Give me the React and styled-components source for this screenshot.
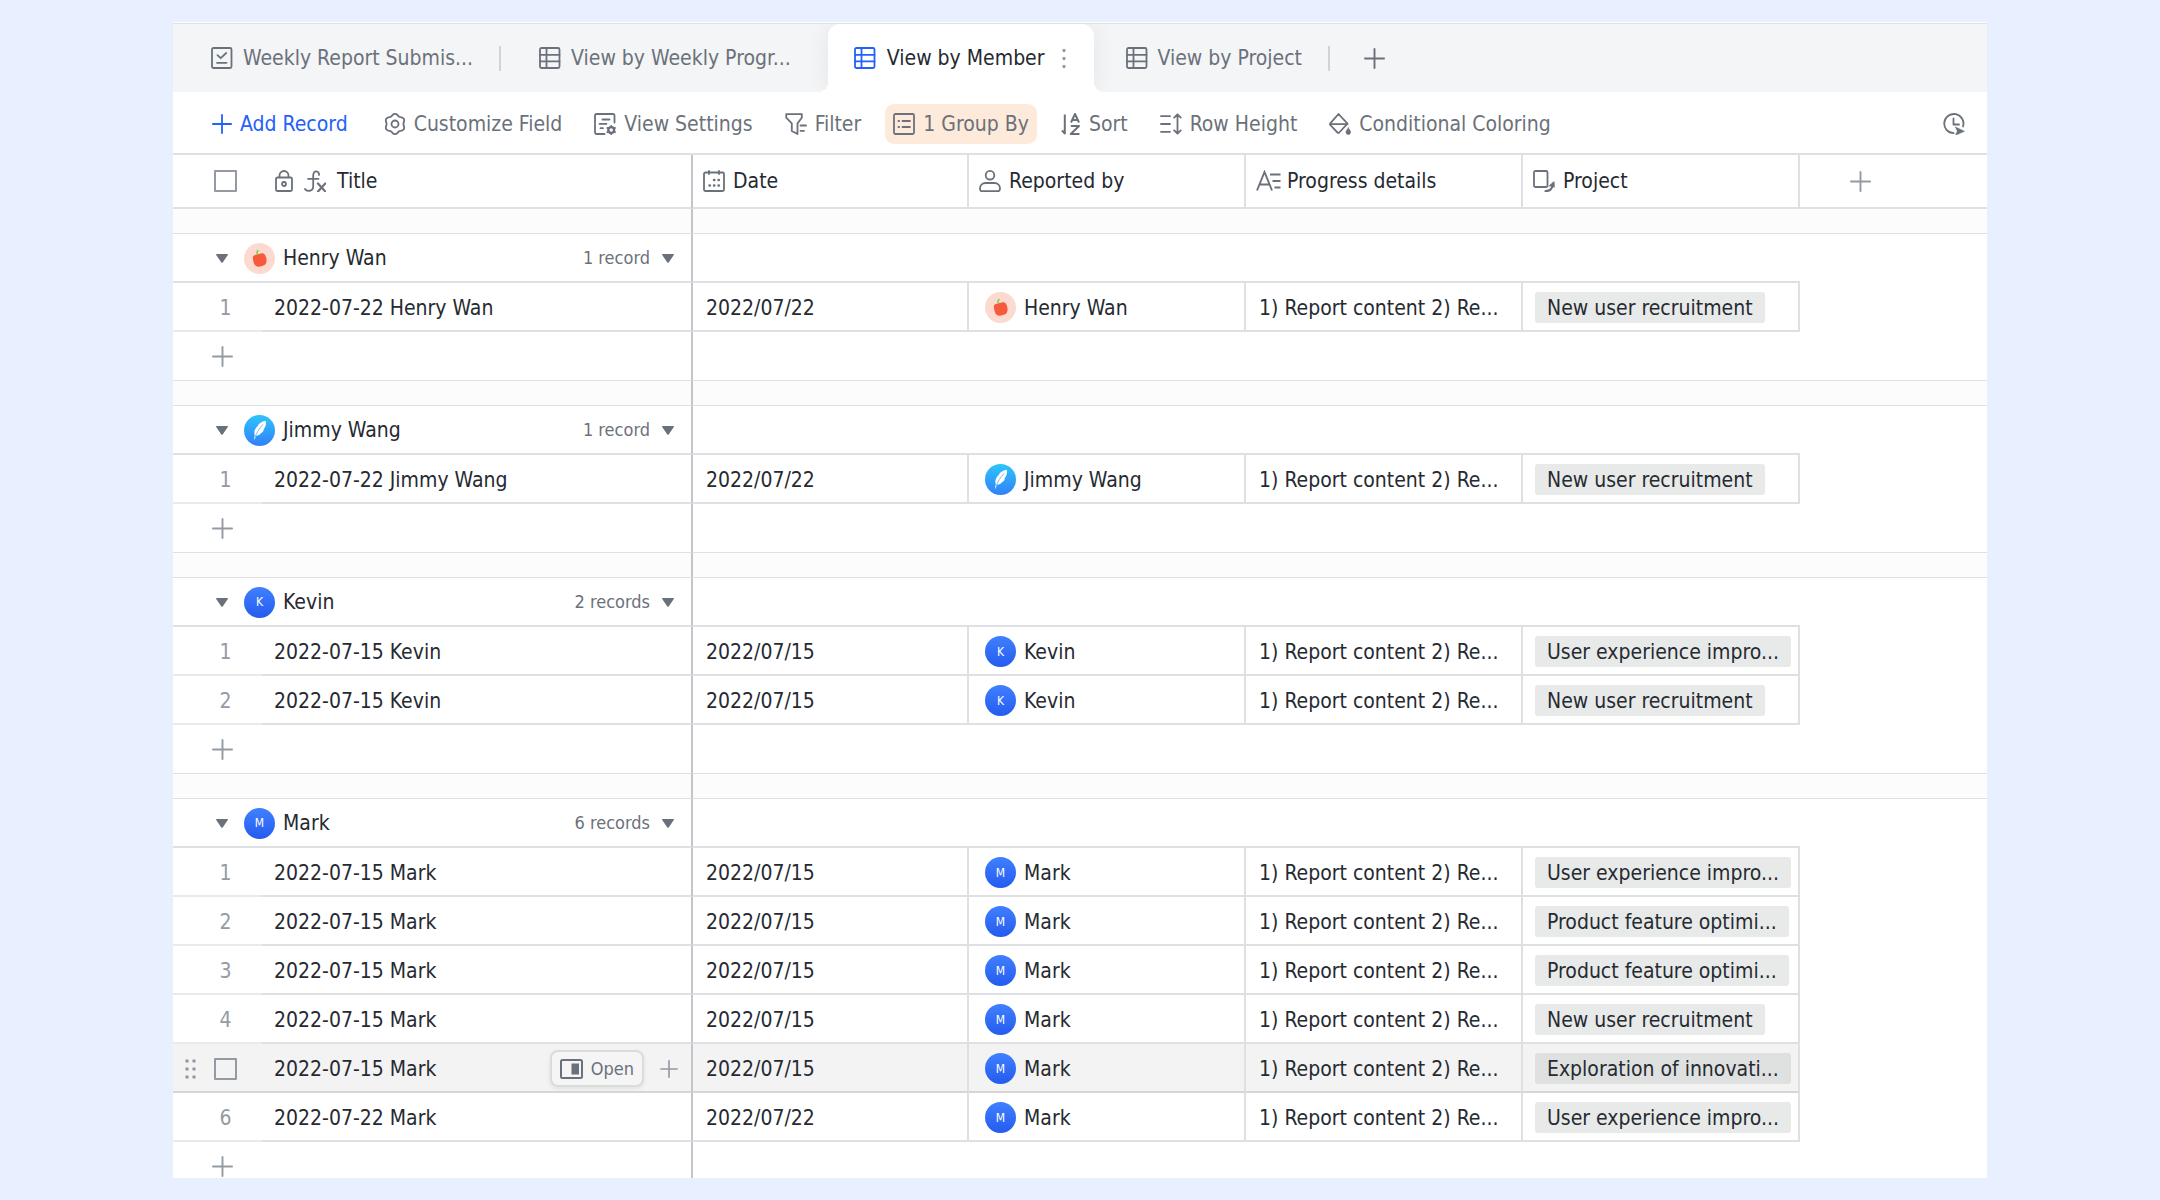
import { useState } from "react";
import styled, { createGlobalStyle, css } from "styled-components";

const colors = {
  page: "#e8efff",
  bar: "#f4f5f7",
  band: "#fcfcfc",
  text: "#262a31",
  muted: "#6b717a",
  faint: "#949aa3",
  line: "#dee0e4",
  lineSoft: "#e9eaec",
  lineHover: "#d4d6d7",
  frozen: "#c2c6cb",
  blue: "#2460fa",
  tag: "#e8eae9",
  hover: "#f3f3f3",
};

const GlobalStyle = createGlobalStyle`
  *, *::before, *::after {
    box-sizing: border-box;
  }
  body {
    margin: 0;
    background: ${colors.page};
    color: ${colors.text};
    font-family: "DejaVu Sans Condensed", Roboto, sans-serif;
    font-size: 21px;
    line-height: 28px;
  }
  button {
    margin: 0;
    padding: 0;
    border: 0;
    background: none;
    color: inherit;
    font: inherit;
    cursor: pointer;
  }
  svg {
    display: block;
    flex: none;
  }
`;

const Page = styled.main`
  min-height: 100vh;
  padding: 22px 173px;
`;

const Panel = styled.section`
  height: calc(100vh - 44px);
  overflow: hidden;
  background: #fff;
  border-top: 1px solid #fff;
`;

const TabBar = styled.nav`
  display: flex;
  align-items: stretch;
  height: 69px;
  padding-left: 6px;
  background: ${colors.bar};
  border-top: 1px solid ${colors.line};
`;

const Tab = styled.button`
  position: relative;
  display: flex;
  align-items: center;
  gap: 10px;
  padding: 0 26px 0 32px;
  color: ${colors.muted};
  white-space: nowrap;

  ${(props) =>
    props.$active &&
    css`
      gap: 11px;
      padding: 0 22px 0 26px;
      margin-left: 11px;
      border-radius: 12px 12px 0 0;
      background: #fff;
      color: ${colors.text};
      box-shadow: 0 0 24px rgba(31, 35, 41, 0.07);
      clip-path: inset(0 -24px 0 -24px);

      &::before,
      &::after {
        content: "";
        position: absolute;
        bottom: 0;
        width: 10px;
        height: 10px;
      }
      &::before {
        left: -10px;
        background: radial-gradient(circle at 0 0, transparent 10px, #fff 10px);
      }
      &::after {
        right: -10px;
        background: radial-gradient(
          circle at 100% 0,
          transparent 10px,
          #fff 10px
        );
      }
    `}
`;

const ActiveIcon = styled.span`
  color: ${colors.blue};
`;

const TabDivider = styled.span`
  align-self: center;
  width: 2px;
  height: 25px;
  margin-right: 6px;
  background: #d0d3d7;
`;

const AddTab = styled.button`
  display: flex;
  align-items: center;
  padding: 0 28px;
  color: ${colors.muted};
`;

const Toolbar = styled.div`
  display: flex;
  align-items: center;
  gap: 16px;
  height: 63px;
  padding: 2px 22px 0 31px;
  border-bottom: 2px solid ${colors.line};
`;

const Tool = styled.button`
  display: flex;
  align-items: center;
  gap: 8px;
  height: 40px;
  padding: 0 8px;
  margin-right: ${(props) => (props.$primary ? "4px" : "0")};
  border-radius: 9px;
  background: ${(props) => (props.$on ? "#feeadb" : "transparent")};
  color: ${(props) => (props.$primary ? colors.blue : colors.muted)};
  white-space: nowrap;
`;

const Spacer = styled.span`
  flex: 1;
`;

const Grid = styled.table`
  width: 100%;
  table-layout: fixed;
  border-collapse: separate;
  border-spacing: 0;
`;

const Col = styled.col`
  width: ${(props) => (props.$width ? `${props.$width}px` : "auto")};
`;

const HeadCell = styled.th`
  height: 54px;
  padding: 0 0 0 ${(props) => props.$pad || 10}px;
  border-bottom: 2px solid ${colors.line};
  border-right: ${(props) => {
    if (props.$open) return "0";
    return `2px solid ${props.$frozen ? colors.frozen : colors.line}`;
  }};
  font-weight: 400;
  text-align: left;
`;

const HeadLabel = styled.span`
  display: flex;
  align-items: center;
  gap: ${(props) => props.$gap || 8}px;

  svg {
    color: ${colors.muted};
  }
`;

const Band = styled.td`
  height: 25px;
  padding: 0;
  background: ${colors.band};
  border-bottom: 1px solid ${colors.line};
  border-right: ${(props) =>
    props.$frozen ? `2px solid ${colors.frozen}` : "0"};
`;

const GroupCell = styled.td`
  height: 49px;
  padding: 1px 0 0;
  border-bottom: ${(props) =>
    props.$open ? "0" : `2px solid ${colors.line}`};
  border-right: ${(props) =>
    props.$frozen ? `2px solid ${colors.frozen}` : "0"};
`;

const GroupHead = styled.div`
  display: flex;
  align-items: center;
  padding: 0 17px 0 43px;
`;

const CaretButton = styled.button`
  display: flex;
  padding: 6px 0;
  margin-right: 16px;
  color: ${colors.muted};
`;

const CountButton = styled.button`
  display: flex;
  align-items: center;
  gap: 12px;
  margin-left: auto;
  color: ${colors.muted};
  font-size: 18px;
`;

const Cell = styled.td`
  height: 49px;
  padding: 2px 0 0 ${(props) => props.$pad || 13}px;
  background: ${(props) => (props.$hover ? colors.hover : "#fff")};
  border-bottom: 2px solid
    ${(props) => (props.$hover ? colors.lineHover : colors.line)};
  border-right: 2px solid
    ${(props) => (props.$frozen ? colors.frozen : colors.line)};
  white-space: nowrap;
  overflow: hidden;
`;

const NumberCell = styled.td`
  height: 49px;
  padding: 2px 0 0;
  background: ${(props) => (props.$hover ? colors.hover : "#fff")};
  border-bottom: 2px solid
    ${(props) => (props.$hover ? colors.lineHover : colors.lineSoft)};
  color: ${colors.faint};
`;

const NumberInner = styled.div`
  display: flex;
  align-items: center;
  justify-content: ${(props) => (props.$tools ? "flex-end" : "center")};
  gap: 17px;
  padding: ${(props) => (props.$tools ? "0 25px 0 0" : "0 0 0 16px")};
`;

const Blank = styled.td`
  padding: 0;
`;

const AddCell = styled.td`
  height: 49px;
  padding: 0 0 0 39px;
  border-bottom: 1px solid ${colors.line};
  border-right: ${(props) =>
    props.$frozen ? `2px solid ${colors.frozen}` : "0"};
`;

const IconButton = styled.button`
  display: flex;
  color: ${(props) => props.$tone || colors.faint};
`;

const Checkbox = styled.input`
  appearance: none;
  display: block;
  width: 23px;
  height: 22px;
  margin: 0;
  border: 2px solid ${colors.faint};
  border-radius: 1px;
  background: transparent;

  &:checked {
    background: ${colors.blue};
  }
`;

const TitleRow = styled.div`
  display: flex;
  align-items: center;
  justify-content: space-between;
  padding-right: 13px;
`;

const RowActions = styled.div`
  display: flex;
  align-items: center;
  gap: 16px;
`;

const OpenButton = styled.button`
  display: flex;
  align-items: center;
  gap: 8px;
  height: 37px;
  padding: 0 8px;
  border: 2px solid #dadcdc;
  border-radius: 8px;
  background: #f5f5f5;
  box-shadow: 0 2px 4px rgba(31, 35, 41, 0.08);
  color: ${colors.muted};
  font-size: 18px;
`;

const Person = styled.span`
  display: flex;
  align-items: center;
  gap: 8px;
`;

const Badge = styled.span`
  display: flex;
  align-items: center;
  justify-content: center;
  flex: none;
  width: 31px;
  height: 31px;
  border-radius: 50%;
  background: ${(props) => props.$fill};
  color: #fff;
  font-size: 12px;
  line-height: 16px;
`;

const Tag = styled.span`
  display: inline-block;
  padding: 2px 12px 1px;
  border-radius: 3px;
  background: ${(props) => (props.$hover ? "#dfe1e0" : colors.tag)};
  vertical-align: middle;
`;

const Icon = ({ children, size = 22, stroke = 1.8 }) => (
  <svg
    width={size}
    height={size}
    viewBox="0 0 22 22"
    fill="none"
    stroke="currentColor"
    strokeWidth={stroke}
    strokeLinecap="round"
    strokeLinejoin="round"
    aria-hidden="true"
  >
    {children}
  </svg>
);

const PlusIcon = ({ size = 21, stroke = 2 }) => (
  <Icon size={size} stroke={stroke}>
    <path d="M11 1v20M1 11h20" />
  </Icon>
);

const FormIcon = () => (
  <Icon>
    <rect x="1" y="1" width="19.500" height="20" rx="1.500" />
    <path d="M6.500 8.200l3.200 3L15.200 6M6 15.800h9.500" />
  </Icon>
);

const GridIcon = () => (
  <Icon>
    <rect x="1" y="1" width="19.500" height="20" rx="1.500" />
    <path d="M1 7.800h19.500M1 14.400h19.500M7.500 1v20" />
  </Icon>
);

const DotsIcon = () => (
  <svg width="16" height="22" viewBox="0 0 16 22" fill="#8f959e" aria-hidden="true">
    <rect x="6.500" y="2" width="3" height="3" rx="1" />
    <rect x="6.500" y="10" width="3" height="3" rx="1" />
    <rect x="6.500" y="18" width="3" height="3" rx="1" />
  </svg>
);

// six soft lobes around the centre
const gearPoints = Array.from({ length: 72 }, (_, i) => {
  const angle = (i * Math.PI) / 36;
  const radius = 9.3 - Math.cos(angle * 6) * 0.9;
  const x = 11 + Math.cos(angle) * radius;
  const y = 11 + Math.sin(angle) * radius;
  return `${x.toFixed(2)},${y.toFixed(2)}`;
}).join(" ");

const GearIcon = () => (
  <Icon>
    <polygon points={gearPoints} />
    <circle cx="11" cy="11" r="3.500" />
  </Icon>
);

const ViewSettingsIcon = () => (
  <Icon>
    <path d="M20.500 9.500V2.500A1.500 1.500 0 0 0 19 1H2.500A1.500 1.500 0 0 0 1 2.500v17A1.500 1.500 0 0 0 2.500 21H10.500" />
    <path d="M8.500 6.500H15.500M5.500 10.800H12.500M6.500 15.200H9" />
    <circle cx="17.200" cy="17" r="2.900" strokeWidth="2.400" />
    <path d="M17.200 12.800v1M17.200 20.200v1M13.400 14.900l.8.400M20.200 18.700l.8.400M13.400 19.100l.8-.400M20.200 15.300l.8-.400" />
  </Icon>
);

const FilterIcon = () => (
  <Icon>
    <path d="M1.200 1.200h15.600v3.600l-4.300 5.600V21L6.800 18V10.400L1.200 4.600z" />
    <path d="M15.500 12.500h5.500M15.500 17.800h3.500" />
  </Icon>
);

const GroupIcon = () => (
  <Icon>
    <rect x="1" y="1" width="20" height="20" rx="1.500" />
    <path d="M5.500 8h.6M9.500 8H17M5.500 14h.6M9.500 14H17" />
  </Icon>
);

const SortIcon = () => (
  <svg
    width="20"
    height="22"
    viewBox="0 0 20 22"
    fill="none"
    stroke="currentColor"
    strokeWidth="2"
    strokeLinejoin="round"
    aria-hidden="true"
  >
    <path d="M3.800 1.500V20.500L1 17.500" />
    <path d="M10 9.500L14 1l4 8.500M11.300 7h5.400M9.800 13h8.200l-8.200 8H18.500" />
  </svg>
);

const RowHeightIcon = () => (
  <Icon>
    <path d="M1 3.200h9M1 11h9M1 18.800h9M17.500 1.500v19M14.200 4.600l3.300-3.300 3.300 3.300M14.200 17.400l3.300 3.300 3.300-3.300" />
  </Icon>
);

const ColoringIcon = () => (
  <Icon>
    <path d="M9.500 1l9 9.700-8.300 8.800a1.200 1.200 0 0 1-1.700 0L1.300 12a1.200 1.200 0 0 1 0-1.600zM1.500 11.200h17" />
    <path
      d="M19.300 15c1.500 2 2.300 3 2.300 4.200a2.300 2.300 0 0 1-4.600 0c0-1.200.8-2.200 2.300-4.200z"
      fill="currentColor"
      strokeWidth="0.600"
    />
  </Icon>
);

const HistoryIcon = () => (
  <Icon>
    <path d="M20 13.500A9.600 9.600 0 1 0 10.600 20.200M10.500 5.500v6H16" />
    <path
      d="M12.500 14l9 4.300-9 4 1.700-4.100z"
      fill="currentColor"
      strokeWidth="0.500"
    />
  </Icon>
);

const LockIcon = () => (
  <svg
    width="18"
    height="22"
    viewBox="0 0 18 22"
    fill="none"
    stroke="currentColor"
    strokeWidth="1.800"
    aria-hidden="true"
  >
    <rect x="1" y="7.500" width="16" height="13.500" rx="1.500" />
    <path d="M4.500 7.500V5.500a4.500 4.500 0 0 1 9 0v2" />
    <circle cx="9" cy="14" r="2" />
  </svg>
);

const FormulaIcon = () => (
  <Icon>
    <path d="M15 5C15.500.5 9.500-.5 9.200 5.500V16.500c0 5-6.500 5.500-8.200 2.500M4 8.800h10.500" />
    <path d="M14 13.500l7.300 8M21.300 13.500l-7.300 8" strokeWidth="2.200" />
  </Icon>
);

const DateIcon = () => (
  <Icon>
    <rect x="1" y="2.500" width="20" height="18.500" rx="1.500" />
    <path d="M6 1v3M16 1v3" />
    <path
      d="M11 10h.4M15.500 10h.4M6.500 15.500h.4M11 15.500h.4M15.500 15.500h.4"
      strokeWidth="2.400"
    />
  </Icon>
);

const PersonIcon = () => (
  <Icon>
    <circle cx="11" cy="5.200" r="4.300" />
    <path d="M1 18.500c0-3 2.200-5.500 5.500-5.500h9c3.300 0 5.500 2.500 5.500 5.500 0 1.700-.6 2.700-2 2.700H3c-1.400 0-2-1-2-2.700z" />
  </Icon>
);

const TextIcon = () => (
  <svg
    width="25"
    height="22"
    viewBox="0 0 25 22"
    fill="none"
    stroke="currentColor"
    strokeWidth="1.900"
    aria-hidden="true"
  >
    <path d="M1 20.500L8.500 2 16 20.500M3.500 14.500h10M14 4.500h10.500M16.500 11h8M18.500 17.500h6" />
  </svg>
);

const LinkIcon = () => (
  <Icon>
    <rect x="1" y="1" width="13.500" height="16" rx="1.500" />
    <path d="M12.500 21c4 .2 7.300-2 7.500-7.500" strokeWidth="2.200" />
    <path
      d="M16 15.800l5.200-4.300.3 5.500z"
      fill="currentColor"
      strokeWidth="0.500"
    />
  </Icon>
);

const CaretIcon = () => (
  <svg width="12" height="9" viewBox="0 0 12 9" fill="currentColor" aria-hidden="true">
    <path d="M.8 0h10.400a.7.700 0 0 1 .6 1.100L6.700 8.400a.9.900 0 0 1-1.400 0L.2 1.100A.7.700 0 0 1 .8 0z" />
  </svg>
);

const DragIcon = () => (
  <svg width="12" height="20" viewBox="0 0 12 20" fill="currentColor" aria-hidden="true">
    {[2, 10, 18].map((y) => (
      <g key={y}>
        <circle cx="2" cy={y} r="1.800" />
        <circle cx="9" cy={y} r="1.800" />
      </g>
    ))}
  </svg>
);

const OpenIcon = () => (
  <svg width="23" height="20" viewBox="0 0 23 20" fill="none" aria-hidden="true">
    <rect
      x="1"
      y="1"
      width="21"
      height="18"
      rx="1.500"
      stroke="currentColor"
      strokeWidth="2"
    />
    <rect x="11.500" y="4.500" width="7.500" height="11" fill="currentColor" />
  </svg>
);

const FruitMark = () => (
  <svg width="31" height="31" viewBox="0 0 31 31" aria-hidden="true">
    <path
      d="M8.800 15c-.3-1.700 1-2.800 3-3.200l5-1.300c2.300-.6 3.600.1 4.500 1.900 1.200 2.200 1.700 5 .9 7.400-.6 2-2 2.800-4.200 3.200-2 .8-4.400 1.300-6 .1-2-1.500-2.900-5-3.200-8.100z"
      fill="#f7593d"
    />
    <path d="M13.700 11.800c-1-1.400-.8-3.400.6-4.800" stroke="#78d33f" strokeWidth="1.500" fill="none" />
  </svg>
);

const FeatherMark = () => (
  <svg width="31" height="31" viewBox="0 0 31 31" aria-hidden="true">
    <path
      d="M21.800 5.800c.6 3.500-.2 6-2 8.200.2 2-1.500 3.800-3.200 4.500-.8 1.300-2.600 2.200-4.300 2.300L9.800 25.500l1-5.300c-1.200-3.200.2-7 2.700-9 1.500-3 5-5 8.300-5.400z"
      fill="#fff"
    />
    <path
      d="M11.200 22c1.500-4.500 4-8.500 7.800-12.500"
      stroke="#5db4fb"
      strokeWidth="0.900"
      fill="none"
    />
  </svg>
);

const people = {
  "Henry Wan": { fill: "#fddacf", mark: <FruitMark /> },
  "Jimmy Wang": {
    fill: "linear-gradient(#2cc5fb, #3380f8)",
    mark: <FeatherMark />,
  },
  Kevin: { fill: "linear-gradient(#4080ff, #245bee)", mark: "K" },
  Mark: { fill: "linear-gradient(#4080ff, #245bee)", mark: "M" },
};

const recruitment = "New user recruitment";
const experience = "User experience impro...";
const optimization = "Product feature optimi...";
const exploration = "Exploration of innovati...";

const groups = [
  { name: "Henry Wan", records: [{ date: "2022-07-22", project: recruitment }] },
  { name: "Jimmy Wang", records: [{ date: "2022-07-22", project: recruitment }] },
  {
    name: "Kevin",
    records: [
      { date: "2022-07-15", project: experience },
      { date: "2022-07-15", project: recruitment },
    ],
  },
  {
    name: "Mark",
    records: [
      { date: "2022-07-15", project: experience },
      { date: "2022-07-15", project: optimization },
      { date: "2022-07-15", project: optimization },
      { date: "2022-07-15", project: recruitment },
      { date: "2022-07-15", project: exploration },
      { date: "2022-07-22", project: experience },
    ],
  },
];

const Avatar = ({ name }) => (
  <Person>
    <Badge $fill={people[name].fill}>{people[name].mark}</Badge>
    {name}
  </Person>
);

const Record = ({ name, index, date, project, hover }) => (
  <tr>
    <NumberCell $hover={hover}>
      <NumberInner $tools={hover}>
        {hover ? (
          <>
            <DragIcon />
            <Checkbox type="checkbox" aria-label={`Select record ${index}`} />
          </>
        ) : (
          index
        )}
      </NumberInner>
    </NumberCell>
    <Cell $frozen $hover={hover} $pad={12}>
      <TitleRow>
        {date} {name}
        {hover && (
          <RowActions>
            <OpenButton type="button">
              <OpenIcon />
              Open
            </OpenButton>
            <IconButton type="button" aria-label="Insert record">
              <PlusIcon size={18} />
            </IconButton>
          </RowActions>
        )}
      </TitleRow>
    </Cell>
    <Cell $hover={hover}>{date.replaceAll("-", "/")}</Cell>
    <Cell $hover={hover} $pad={16}>
      <Avatar name={name} />
    </Cell>
    <Cell $hover={hover}>1) Report content 2) Re...</Cell>
    <Cell $hover={hover} $pad={12}>
      <Tag $hover={hover}>{project}</Tag>
    </Cell>
    <Blank />
  </tr>
);

const Group = ({ name, records, hovered }) => {
  const [open, setOpen] = useState(true);

  return (
    <tbody>
      <tr>
        <Band colSpan={2} $frozen />
        <Band colSpan={5} />
      </tr>
      <tr>
        <GroupCell colSpan={2} $frozen>
          <GroupHead>
            <CaretButton
              type="button"
              aria-label={`Toggle ${name}`}
              aria-expanded={open}
              onClick={() => setOpen(!open)}
            >
              <CaretIcon />
            </CaretButton>
            <Avatar name={name} />
            <CountButton type="button">
              {records.length} {records.length === 1 ? "record" : "records"}
              <CaretIcon />
            </CountButton>
          </GroupHead>
        </GroupCell>
        <GroupCell colSpan={4} />
        <GroupCell $open />
      </tr>
      {open &&
        records.map((record, i) => (
          <Record
            key={i}
            name={name}
            index={i + 1}
            hover={hovered === i}
            {...record}
          />
        ))}
      <tr>
        <AddCell colSpan={2} $frozen>
          <IconButton type="button" aria-label={`Add record to ${name}`}>
            <PlusIcon />
          </IconButton>
        </AddCell>
        <AddCell colSpan={5} />
      </tr>
    </tbody>
  );
};

const App = () => (
  <>
    <GlobalStyle />
    <Page>
      <Panel>
        <TabBar>
          <Tab type="button">
            <FormIcon />
            Weekly Report Submis...
          </Tab>
          <TabDivider />
          <Tab type="button">
            <GridIcon />
            View by Weekly Progr...
          </Tab>
          <Tab type="button" $active>
            <ActiveIcon>
              <GridIcon />
            </ActiveIcon>
            View by Member
            <DotsIcon />
          </Tab>
          <Tab type="button">
            <GridIcon />
            View by Project
          </Tab>
          <TabDivider />
          <AddTab type="button" aria-label="Add view">
            <PlusIcon />
          </AddTab>
        </TabBar>

        <Toolbar>
          <Tool type="button" $primary>
            <PlusIcon size={20} />
            Add Record
          </Tool>
          <Tool type="button">
            <GearIcon />
            Customize Field
          </Tool>
          <Tool type="button">
            <ViewSettingsIcon />
            View Settings
          </Tool>
          <Tool type="button">
            <FilterIcon />
            Filter
          </Tool>
          <Tool type="button" $on>
            <GroupIcon />1 Group By
          </Tool>
          <Tool type="button">
            <SortIcon />
            Sort
          </Tool>
          <Tool type="button">
            <RowHeightIcon />
            Row Height
          </Tool>
          <Tool type="button">
            <ColoringIcon />
            Conditional Coloring
          </Tool>
          <Spacer />
          <IconButton type="button" aria-label="History" $tone={colors.muted}>
            <HistoryIcon />
          </IconButton>
        </Toolbar>

        <Grid>
          <colgroup>
            <Col $width={89} />
            <Col $width={431} />
            <Col $width={276} />
            <Col $width={277} />
            <Col $width={277} />
            <Col $width={277} />
            <Col />
          </colgroup>
          <thead>
            <tr>
              <HeadCell $open $pad={41}>
                <Checkbox type="checkbox" aria-label="Select all records" />
              </HeadCell>
              <HeadCell $frozen $pad={13}>
                <HeadLabel $gap={11}>
                  <LockIcon />
                  <FormulaIcon />
                  Title
                </HeadLabel>
              </HeadCell>
              <HeadCell>
                <HeadLabel>
                  <DateIcon />
                  Date
                </HeadLabel>
              </HeadCell>
              <HeadCell>
                <HeadLabel>
                  <PersonIcon />
                  Reported by
                </HeadLabel>
              </HeadCell>
              <HeadCell>
                <HeadLabel $gap={6}>
                  <TextIcon />
                  Progress details
                </HeadLabel>
              </HeadCell>
              <HeadCell>
                <HeadLabel>
                  <LinkIcon />
                  Project
                </HeadLabel>
              </HeadCell>
              <HeadCell $open $pad={50}>
                <IconButton type="button" aria-label="Add field">
                  <PlusIcon />
                </IconButton>
              </HeadCell>
            </tr>
          </thead>
          {groups.map((group) => (
            <Group
              key={group.name}
              {...group}
              hovered={group.name === "Mark" ? 4 : -1}
            />
          ))}
        </Grid>
      </Panel>
    </Page>
  </>
);

export default App;
